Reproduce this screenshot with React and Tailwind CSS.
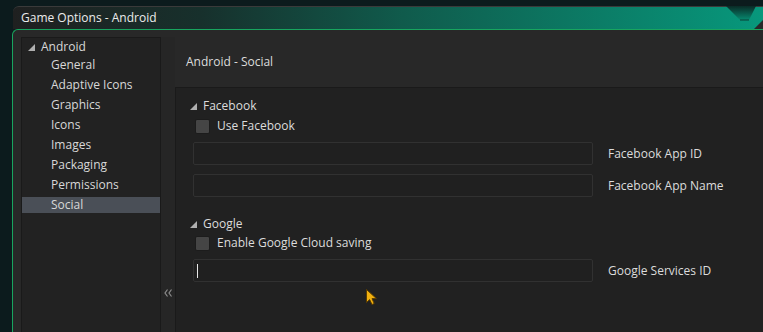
import React from "react";

const Tri = ({ className = "" }) => (
  <svg width="7" height="7" viewBox="0 0 7 7" className={className}>
    <polygon points="7,0 7,7 0,7" fill="#b0b0b0" />
  </svg>
);

const Checkbox = () => (
  <div className="w-[15px] h-[15px] rounded-[2px] bg-[#454545] border border-[#1c1c1c] shrink-0" />
);

const Input = ({ cursor }) => (
  <div className="w-[400px] h-[23px] rounded-[2px] bg-[#202020] border border-[#313131] flex items-center pl-[3px]">
    {cursor && <div className="w-px h-[14px] bg-[#e8e8e8]" />}
  </div>
);

const items = ["General", "Adaptive Icons", "Graphics", "Icons", "Images", "Packaging", "Permissions", "Social"];

export default function App() {
  return (
    <div
      className="relative w-[763px] h-[332px] overflow-hidden bg-[#0c1b1d] pt-[6px] pl-[13px] flex flex-col text-[12px] text-[#dcdcdc]"
      style={{ fontFamily: '"Open Sans", "Noto Sans", sans-serif' }}
    >
      {/* Title bar */}
      <div className="relative h-[23px] shrink-0 rounded-tl-[6px] border-t border-[#3a3a3a] bg-[linear-gradient(90deg,#1f2020_0%,#17302c_25%,#105b4c_52%,#07987c_100%)] flex items-center pl-[8px]">
        <span className="text-[#ececec] leading-none">Game Options - Android</span>
        <svg className="absolute right-0 top-[-1px]" width="37" height="23" viewBox="0 0 37 23">
          <defs>
            <linearGradient id="ng" x1="0" y1="0" x2="0" y2="1">
              <stop offset="0" stopColor="#0a2a26" />
              <stop offset="1" stopColor="#078a70" />
            </linearGradient>
          </defs>
          <polygon points="0,0 30,0 23,14 14,14" fill="url(#ng)" />
          <polyline points="14,14 23,14" stroke="#0a3f36" strokeWidth="1" fill="none" />
          <polygon points="37,14 37,23 28,23" fill="#282828" />
        </svg>
      </div>
      {/* Body */}
      <div className="flex-1 -ml-px rounded-tl-[6px] border-l border-t border-[#18a55f] bg-[#282828] pt-[7px] pl-[8px] flex min-h-0">
        {/* Sidebar */}
        <div className="w-[140px] shrink-0 bg-[#222222] border border-[#1a1a1a] border-b-0 flex flex-col pt-[1px]">
          <div className="h-[16px] flex items-center pl-[6px]">
            <Tri />
            <span className="ml-[6px] text-[#d8d8d8]">Android</span>
          </div>
          {items.map((it, i) => (
            <div
              key={it}
              className={
                "h-[16px] flex items-center pl-[29px] text-[#d8d8d8] " +
                (i === 0 ? "mt-[2px] " : "mt-[4px] ") +
                (it === "Social" ? "bg-[#4a4f57]" : "")
              }
            >
              {it}
            </div>
          ))}
        </div>
        {/* Collapse strip */}
        <div className="w-[14px] shrink-0 bg-[#262626] flex flex-col justify-end items-center pb-[35px]">
          <svg width="8" height="8" viewBox="0 0 8 8">
            <polyline points="3.5,0.5 1,4 3.5,7.5" stroke="#8c8c8c" strokeWidth="1.2" fill="none" />
            <polyline points="7.5,0.5 5,4 7.5,7.5" stroke="#8c8c8c" strokeWidth="1.2" fill="none" />
          </svg>
        </div>
        {/* Content */}
        <div className="flex-1 flex flex-col min-w-0">
          <div className="h-[50px] shrink-0 flex items-center pl-[11px] pb-[1px]">
            <span>Android - Social</span>
          </div>
          <div className="flex-1 bg-[#212121] border-l border-t border-[#1a1a1a] pl-[14px] flex flex-col">
            <div className="mt-[10px] h-[16px] flex items-center">
              <Tri />
              <span className="ml-[6px]">Facebook</span>
            </div>
            <div className="mt-[4px] h-[16px] flex items-center pl-[5px]">
              <Checkbox />
              <span className="ml-[7px]">Use Facebook</span>
            </div>
            <div className="mt-[8px] flex items-center pl-[3px]">
              <Input />
              <span className="ml-[15px]">Facebook App ID</span>
            </div>
            <div className="mt-[9px] flex items-center pl-[3px]">
              <Input />
              <span className="ml-[15px]">Facebook App Name</span>
            </div>
            <div className="mt-[19px] h-[16px] flex items-center">
              <Tri />
              <span className="ml-[6px]">Google</span>
            </div>
            <div className="mt-[3px] h-[16px] flex items-center pl-[5px]">
              <Checkbox />
              <span className="ml-[7px]">Enable Google Cloud saving</span>
            </div>
            <div className="mt-[8px] flex items-center pl-[3px]">
              <Input cursor />
              <span className="ml-[15px]">Google Services ID</span>
            </div>
          </div>
        </div>
      </div>
      {/* Mouse cursor */}
      <svg className="absolute left-[365px] top-[288px]" width="14" height="18" viewBox="0 0 14 18">
        <path d="M1.5 1.5 L1.5 14.5 L4.6 11.6 L7 16.5 L9.2 15.5 L7 10.6 L11.4 10.6 Z" fill="#f0b010" stroke="#5c3d00" strokeWidth="1" strokeLinejoin="round" />
      </svg>
    </div>
  );
}
